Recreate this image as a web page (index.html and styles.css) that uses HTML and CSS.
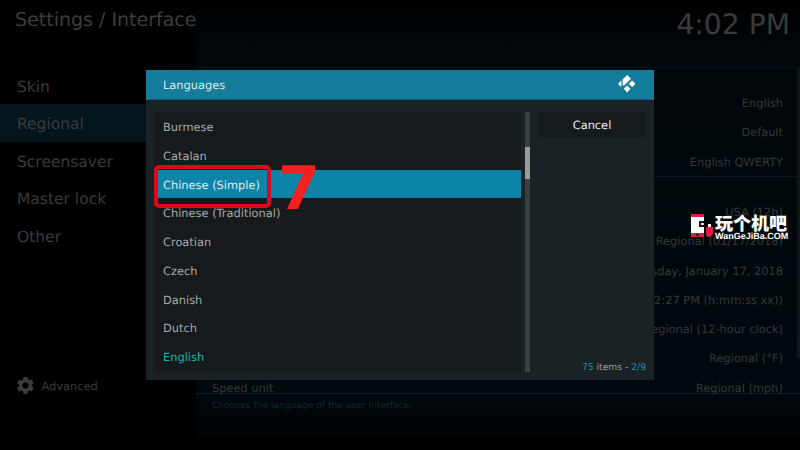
FILE: index.html
```html
<!DOCTYPE html>
<html lang="en">
<head>
<meta charset="utf-8">
<title>Languages</title>
<link rel="stylesheet" href="styles.css">
</head>
<body>
<div class="screen">
  <aside class="side">
    <h1 class="title">Settings / Interface</h1>
    <nav class="nav">
      <div class="nav-item">Skin</div>
      <div class="nav-item nav-active">Regional</div>
      <div class="nav-item">Screensaver</div>
      <div class="nav-item">Master lock</div>
      <div class="nav-item">Other</div>
    </nav>
    <div class="advanced">
      <svg class="gear" viewBox="0 0 24 24"><path d="M19.14 12.94c.04-.3.06-.61.06-.94 0-.32-.02-.64-.07-.94l2.03-1.58a.49.49 0 0 0 .12-.61l-1.92-3.32a.488.488 0 0 0-.59-.22l-2.39.96c-.5-.38-1.03-.7-1.62-.94l-.36-2.54a.484.484 0 0 0-.48-.41h-3.84c-.24 0-.43.17-.47.41l-.36 2.54c-.59.24-1.13.57-1.62.94l-2.39-.96c-.22-.08-.47 0-.59.22L2.74 8.87c-.12.21-.08.47.12.61l2.03 1.58c-.05.3-.09.63-.09.94s.02.64.07.94l-2.03 1.58a.49.49 0 0 0-.12.61l1.92 3.32c.12.22.37.29.59.22l2.39-.96c.5.38 1.03.7 1.62.94l.36 2.54c.05.24.24.41.48.41h3.84c.24 0 .44-.17.47-.41l.36-2.54c.59-.24 1.13-.56 1.62-.94l2.39.96c.22.08.47 0 .59-.22l1.92-3.32c.12-.22.07-.47-.12-.61l-2.01-1.58zM12 15.6c-1.98 0-3.6-1.62-3.6-3.6s1.62-3.6 3.6-3.6 3.6 1.62 3.6 3.6-1.62 3.6-3.6 3.6z"/></svg>
      <span>Advanced</span>
    </div>
  </aside>
  <main class="panel">
    <div class="clock">4:02 PM</div>
    <section class="settings">
      <div class="group group-first">
        <div class="row"><span>English</span></div>
        <div class="row"><span>Default</span></div>
        <div class="row"><span>English QWERTY</span></div>
      </div>
      <div class="group">
        <div class="row"><span>USA (12h)</span></div>
        <div class="row"><span>Regional (01/17/2018)</span></div>
        <div class="row"><span>Wednesday, January 17, 2018</span></div>
        <div class="row"><span>4:02:27 PM (h:mm:ss xx))</span></div>
        <div class="row"><span>Regional (12-hour clock)</span></div>
        <div class="row"><span>Regional (°F)</span></div>
        <div class="row row-last"><span>Speed unit</span><span>Regional (mph)</span></div>
      </div>
      <div class="track"></div>
    </section>
    <footer class="hint">Chooses the language of the user interface.</footer>
  </main>

  <div class="dialog">
    <header class="dialog-head">
      <span>Languages</span>
      <svg class="logo" viewBox="0 0 24 24"><path d="M0 10.5 4 6.5V14.500Z"/><path d="M11 0 15.5 4.5 7 13 5.5 11V5.500Z"/><path d="M17 6.500 21 10.500 17 14.500 13 10.500Z"/><path d="M11 12.500 15 16.500 11 21 7 16.500Z"/></svg>
    </header>
    <div class="dialog-body">
      <ul class="list">
        <li class="item">Burmese</li>
        <li class="item">Catalan</li>
        <li class="item item-focus">Chinese (Simple)</li>
        <li class="item">Chinese (Traditional)</li>
        <li class="item">Croatian</li>
        <li class="item">Czech</li>
        <li class="item">Danish</li>
        <li class="item">Dutch</li>
        <li class="item item-current">English</li>
      </ul>
      <div class="scroll"><div class="thumb"></div></div>
      <div class="actions">
        <div class="cancel">Cancel</div>
        <div class="count"><b>75</b> items - <b>2/9</b></div>
      </div>
    </div>
  </div>

  <div class="mark-box"></div>
  <div class="mark-num">7</div>

  <div class="wm">
    <svg class="wm-icon" viewBox="0 0 22 24">
      <rect x="0" y="0" width="13" height="23" fill="#fff"/>
      <rect x="0" y="0" width="13" height="3" fill="#e8173f"/>
      <rect x="0" y="19" width="13" height="4" fill="#e8173f"/>
      <rect x="8" y="7" width="5" height="6" fill="#111"/>
      <rect x="10" y="9" width="3" height="2" fill="#ddd"/>
      <rect x="5" y="20" width="3" height="2" fill="#222"/>
      <path d="M15 13h7v7l-3 3h-2l-2-2z" fill="#e8173f"/>
      <rect x="17" y="10" width="3" height="3" fill="#fff"/>
    </svg>
    <div class="wm-text">
      <div class="wm-cn">玩个机吧</div>
      <div class="wm-en">WanGeJiBa.COM</div>
    </div>
  </div>
</div>
</body>
</html>
```
FILE: styles.css
```css
* { box-sizing: border-box; }
html, body { margin: 0; padding: 0; background: #000; }
.screen {
  position: relative;
  width: 800px;
  height: 450px;
  overflow: hidden;
  display: flex;
  background: #000;
  font-family: "DejaVu Sans", sans-serif;
  text-rendering: geometricPrecision;
}
.side { width: 196px; flex: none; display: flex; flex-direction: column; }
.title {
  margin: 0;
  padding: 9px 0 0 15px;
  height: 66.5px;
  font-size: 19px;
  line-height: 22px;
  font-weight: 400;
  color: #3d3d3d;
  white-space: nowrap;
}
.nav { display: flex; flex-direction: column; }
.nav-item {
  height: 37.5px;
  padding-left: 17px;
  font-size: 15.5px;
  line-height: 40px;
  color: #3a3a3a;
}
.nav-active { background: #03161d; width: 196px; }
.advanced {
  margin-top: 121px;
  padding-left: 14.500px;
  display: flex;
  align-items: center;
  gap: 6px;
  font-size: 11.400px;
  color: #3a3a3a;
}
.gear { width: 21px; height: 21px; fill: #3c3c3c; }
.panel {
  flex: 1;
  display: flex;
  flex-direction: column;
  background: linear-gradient(180deg, #000 0, #01070b 50px, #01090e 85%, #000 100%);
}
.clock {
  height: 68px;
  padding: 5px 10px 0 0;
  text-align: right;
  font-size: 28.200px;
  line-height: 40px;
  color: #3a3a3a;
  border-bottom: 1px solid #04161d;
}
.settings { position: relative; height: 326px; border-bottom: 1px solid #04222b; }
.group { padding: 0 17px 0 16px; }
.group-first { padding-top: 21px; height: 109px; border-bottom: 1px solid #0c1a1f; }
.group + .group { padding-top: 21px; }
.row {
  display: flex;
  justify-content: flex-end;
  height: 29.3px;
  font-size: 11.400px;
  line-height: 29.3px;
  color: #373737;
  white-space: nowrap;
}
.row-last { justify-content: space-between; height: 12px; line-height: 12px; margin-top: 8px; }
.track { position: absolute; right: 0; top: 0; width: 3px; height: 290px; background: #131618; }
.hint { padding: 5px 0 0 16px; font-size: 9.100px; line-height: 14px; color: #062c38; }

.dialog {
  position: absolute;
  left: 146px;
  top: 70px;
  width: 508px;
  height: 310px;
  background: #1b2225;
  display: flex;
  flex-direction: column;
}
.dialog-head {
  height: 30px;
  padding: 0 17px;
  flex: none;
  display: flex;
  align-items: center;
  justify-content: space-between;
  background: #147d9c;
  border-bottom: 1px solid #0f6680;
  font-size: 11.400px;
  color: #dfe5e7;
}
.logo { width: 20px; height: 20px; fill: #fff; margin-right: -1px; }
.dialog-body { flex: 1; display: flex; padding: 12px 8px 8px; }
.list {
  list-style: none;
  margin: 0;
  padding: 0;
  width: 367px;
  height: 260px;
  background: #161a1c;
}
.item {
  height: 28.75px;
  padding-left: 9px;
  font-size: 11.400px;
  line-height: 31px;
  color: #a6a9aa;
}
.item-focus { background: #0e84a8; color: #dcecf1; }
.item-current { color: #14b7a4; }
.scroll { margin-left: 4px; width: 5px; height: 260px; background: #3a3f42; }
.thumb { margin-top: 35px; height: 32px; background: #9a9c9c; }
.actions { margin-left: 8px; flex: 1; display: flex; flex-direction: column; }
.cancel {
  height: 25px;
  background: #161a1c;
  text-align: center;
  font-size: 11.400px;
  line-height: 27px;
  color: #eee;
}
.count { margin-top: auto; margin-bottom: -3px; text-align: right; font-size: 9.200px; line-height: 14px; color: #9a9c9d; }
.count b { font-weight: 400; color: #1b8eb0; }

.mark-box {
  position: absolute;
  left: 154px;
  top: 165px;
  width: 117px;
  height: 43px;
  border: 4px solid #e2061c;
  border-radius: 5px;
}
.mark-num {
  position: absolute;
  left: 278px;
  top: 154px;
  font-weight: 700;
  font-size: 60px;
  line-height: 70px;
  color: #f2201f;
}
.wm { position: absolute; left: 691px; top: 214px; display: flex; gap: 2px; color: #fff; }
.wm-icon { width: 22px; height: 24px; }
.wm-text { display: flex; flex-direction: column; font-weight: 700; }
.wm-cn { font-family: "Noto Sans CJK SC", sans-serif; font-weight: 900; font-size: 18px; line-height: 18px; white-space: nowrap; }
.wm-en { font-family: "Liberation Sans", sans-serif; font-size: 9px; line-height: 9px; white-space: nowrap; }
```
